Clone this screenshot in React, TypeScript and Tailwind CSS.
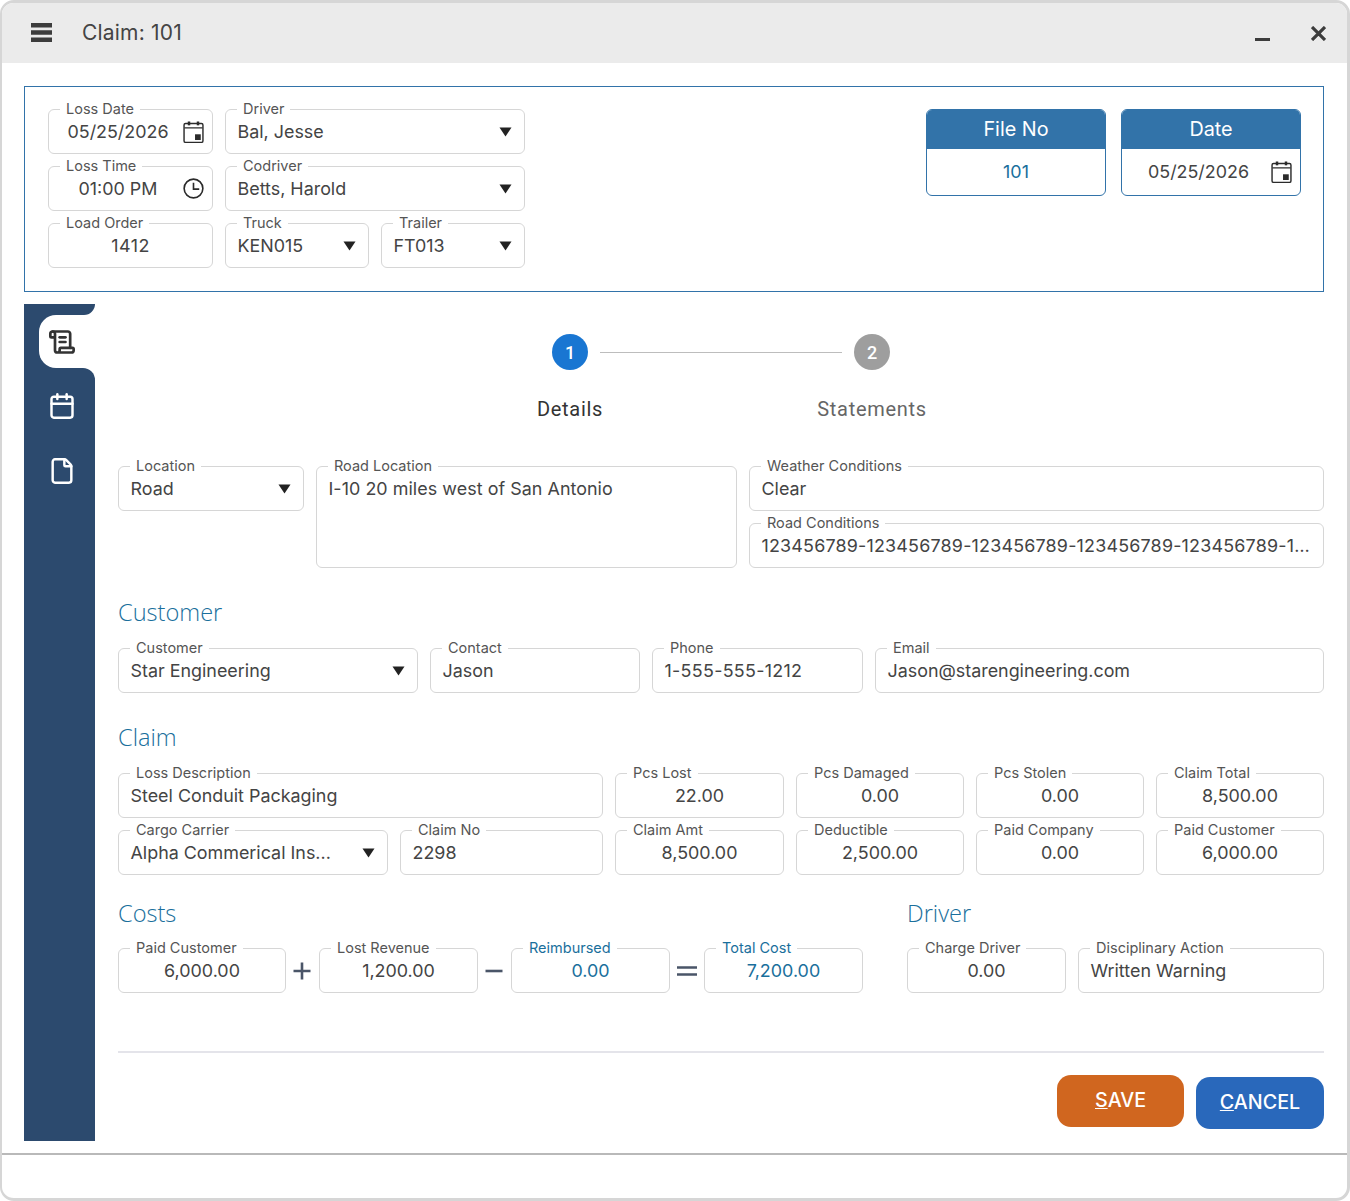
import React from "react";
import { ScrollText, Calendar, File } from "lucide-react";

const Caret = () => (
  <svg width="13" height="10" viewBox="0 0 13 10" className="shrink-0">
    <path d="M0.5 0.5h12L6.5 9.5z" fill="#222" />
  </svg>
);

const CalIcon = () => (
  <svg width="21" height="24" viewBox="0 0 22 24" className="shrink-0">
    <rect x="1.1" y="3.1" width="19.8" height="19.8" rx="1.6" fill="none" stroke="#2b2b2b" strokeWidth="1.5" />
    <path d="M1.5 7.7h19" stroke="#2b2b2b" strokeWidth="1.5" />
    <rect x="5" y="1" width="2.6" height="4" fill="#2b2b2b" />
    <rect x="14.4" y="1" width="2.6" height="4" fill="#2b2b2b" />
    <rect x="12.6" y="14.4" width="6" height="6" fill="#2b2b2b" />
  </svg>
);

const ClockIcon = () => (
  <svg width="21" height="21" viewBox="0 0 22 22" className="shrink-0">
    <circle cx="11" cy="11" r="9.8" fill="none" stroke="#2b2b2b" strokeWidth="1.7" />
    <path d="M11 5v6.6h6" fill="none" stroke="#2b2b2b" strokeWidth="1.7" />
  </svg>
);

type FieldProps = {
  label: string;
  value: string;
  className: string;
  valueClass?: string;
  center?: boolean;
  caret?: boolean;
  icon?: React.ReactNode;
  accent?: boolean;
  top?: boolean;
};

const Field = ({ label, value, className, valueClass = "", center, caret, icon, accent, top }: FieldProps) => (
  <div
    className={`relative shrink-0 rounded-[6px] border border-[#d6d6d6] bg-white flex ${top ? "items-start pt-[9px]" : "items-center"} ${className}`}
  >
    <span
      className={`absolute left-[11px] top-[-9px] bg-white px-[6px] text-[14.5px] leading-[16px] whitespace-nowrap ${accent ? "text-[#1a6f9c]" : "text-[#555555]"}`}
    >
      {label}
    </span>
    <span
      className={`flex-1 min-w-0 truncate text-[17.9px] leading-[24px] pt-[1px] ${center ? "text-center" : "pl-[11.5px]"} ${accent ? "text-[#1a6f9c]" : "text-[#444444]"} ${valueClass}`}
    >
      {value}
    </span>
    {caret && (
      <span className="ml-[8px] mr-[12px]">
        <Caret />
      </span>
    )}
    {icon && <span className="-ml-[4px] mr-[8px] flex">{icon}</span>}
  </div>
);

const Heading = ({ children, className = "" }: { children: React.ReactNode; className?: string }) => (
  <h2
    className={`text-[23.6px] leading-[30px] font-light text-[#1a6f9c] ${className}`}
    style={{ fontFamily: "'Open Sans', sans-serif" }}
  >
    {children}
  </h2>
);

const InfoCard = ({ title, children }: { title: string; children: React.ReactNode }) => (
  <div className="w-[180px] h-[87px] rounded-[6px] border border-[#3273a9] flex flex-col overflow-hidden">
    <div className="h-[39px] bg-[#3273a9] text-white text-[19.8px] leading-[38px] text-center">{title}</div>
    <div className="flex-1 flex items-center">{children}</div>
  </div>
);

const Op = ({ d, w }: { d: string; w: string }) => (
  <div className={`${w} shrink-0 flex items-center justify-center pr-[1px]`}>
    <svg width="20" height="20" viewBox="0 0 20 20">
      <path d={d} stroke="#4a5568" strokeWidth="2.6" fill="none" />
    </svg>
  </div>
);

export default function App() {
  return (
    <div
      className="w-[1350px] h-[1201px] bg-white flex flex-col overflow-hidden rounded-[14px] border-solid border-[#d6d6d6] border-t-[3px] border-b-[3px] border-l-[2px] border-r-[3px]"
      style={{ fontFamily: "Inter, 'Noto Sans', sans-serif" }}
    >
      <header className="h-[60px] shrink-0 bg-[#ebebeb] flex items-center pl-[29px] pr-[21px]">
        <svg width="21" height="19" viewBox="0 0 21 19" className="shrink-0 -mt-[2px]">
          <path d="M0 0h21v4.6H0zM0 7.2h21v4.6H0zM0 14.4h21V19H0z" fill="#3c3c3c" />
        </svg>
        <span className="ml-[30px] text-[21px] tracking-[0.2px] text-[#444444]">Claim: 101</span>
        <div className="ml-auto flex items-center gap-[41px]">
          <svg width="15" height="20" viewBox="0 0 15 20">
            <path d="M0 16.5h15" stroke="#3c3c3c" strokeWidth="3" />
          </svg>
          <svg width="15" height="15" viewBox="0 0 15 15">
            <path d="M1 1l13 13M14 1L1 14" stroke="#3c3c3c" strokeWidth="3.2" />
          </svg>
        </div>
      </header>

      <div className="pl-[22px] pr-[23px] shrink-0">
        <section className="mt-[23px] h-[206px] border border-[#3273a9] pt-[22px] pl-[23px] pr-[22px] flex justify-between">
          <div className="flex flex-col gap-[12px] w-[477px]">
            <div className="flex gap-[12px]">
              <Field label="Loss Date" value="05/25/2026" className="w-[165px] h-[45px]" center icon={<CalIcon />} />
              <Field label="Driver" value="Bal, Jesse" className="w-[300px] h-[45px]" caret />
            </div>
            <div className="flex gap-[12px]">
              <Field label="Loss Time" value="01:00 PM" className="w-[165px] h-[45px]" center icon={<ClockIcon />} />
              <Field label="Codriver" value="Betts, Harold" className="w-[300px] h-[45px]" caret />
            </div>
            <div className="flex gap-[12px]">
              <Field label="Load Order" value="1412" className="w-[165px] h-[45px]" valueClass="tracking-[0.5px]" center />
              <Field label="Truck" value="KEN015" className="w-[144px] h-[45px]" caret />
              <Field label="Trailer" value="FT013" className="w-[144px] h-[45px]" caret />
            </div>
          </div>
          <div className="flex gap-[15px]">
            <InfoCard title="File No">
              <span className="flex-1 text-center text-[17.9px] text-[#1a6f9c]">101</span>
            </InfoCard>
            <InfoCard title="Date">
              <span className="flex-1 text-center text-[17.9px] text-[#444444]">05/25/2026</span>
              <span className="-ml-[4px] mr-[8px] flex">
                <CalIcon />
              </span>
            </InfoCard>
          </div>
        </section>

        <div className="mt-[12px] h-[837px] flex gap-[23px]">
          <nav className="w-[71px] shrink-0 flex flex-col">
            <div className="h-[11px] bg-[#2c4a6e] rounded-br-[12px]" />
            <div className="bg-[#2c4a6e] pl-[15px]">
              <div className="h-[53px] bg-white rounded-l-[17px] flex items-center pl-[9px]">
                <ScrollText size={28} strokeWidth={2.3} color="#333333" />
              </div>
            </div>
            <div className="flex-1 bg-[#2c4a6e] rounded-tr-[12px] pl-[24px] pt-[24px] flex flex-col gap-[37px]">
              <Calendar size={28} strokeWidth={2.1} color="#ffffff" />
              <File size={28} strokeWidth={2.1} color="#ffffff" />
            </div>
          </nav>

          <main className="flex-1 min-w-0 pt-[30px]">
            <div className="flex items-center justify-center gap-[12px]">
              <div className="w-[36px] h-[36px] rounded-full bg-[#1976d2] text-white text-[18px] font-medium flex items-center justify-center" style={{ fontFamily: "Roboto, sans-serif" }}>1</div>
              <div className="w-[242px] h-[1px] bg-[#bdbdbd]" />
              <div className="w-[36px] h-[36px] rounded-full bg-[#9e9e9e] text-white text-[18px] font-medium flex items-center justify-center" style={{ fontFamily: "Roboto, sans-serif" }}>2</div>
            </div>
            <div
              className="mt-[25px] flex justify-center text-[20px] leading-[28px] tracking-[0.7px]"
              style={{ fontFamily: "Roboto, sans-serif" }}
            >
              <div className="w-[302px] text-center text-[#333333]">Details</div>
              <div className="w-[302px] text-center text-[#666666]">Statements</div>
            </div>

            <div className="mt-[43px] flex gap-[12px]">
              <Field label="Location" value="Road" className="w-[186px] h-[45px]" caret />
              <Field label="Road Location" value="I-10 20 miles west of San Antonio" className="w-[421px] h-[102px]" valueClass="tracking-[0.05px]" top />
              <div className="flex-1 min-w-0 flex flex-col gap-[12px]">
                <Field label="Weather Conditions" value="Clear" className="w-full h-[45px]" />
                <Field
                  label="Road Conditions"
                  value="123456789-123456789-123456789-123456789-123456789-123456789"
                  className="w-full h-[45px] pr-[12px]"
                  valueClass="tracking-[0.2px]"
                />
              </div>
            </div>

            <Heading className="mt-[29px] mb-[21px]">Customer</Heading>
            <div className="flex gap-[12px]">
              <Field label="Customer" value="Star Engineering" className="w-[300px] h-[45px]" caret />
              <Field label="Contact" value="Jason" className="w-[210px] h-[45px]" />
              <Field label="Phone" value="1-555-555-1212" className="w-[211px] h-[45px]" valueClass="tracking-[0.3px]" />
              <Field label="Email" value="Jason@starengineering.com" className="flex-1 h-[45px]" />
            </div>

            <Heading className="mt-[29px] mb-[21px]">Claim</Heading>
            <div className="flex flex-col gap-[12px]">
              <div className="flex gap-[12px]">
                <Field label="Loss Description" value="Steel Conduit Packaging" className="w-[485px] h-[45px]" />
                <Field label="Pcs Lost" value="22.00" className="w-[169px] h-[45px]" center />
                <Field label="Pcs Damaged" value="0.00" className="w-[168px] h-[45px]" center />
                <Field label="Pcs Stolen" value="0.00" className="w-[168px] h-[45px]" center />
                <Field label="Claim Total" value="8,500.00" className="w-[168px] h-[45px]" center />
              </div>
              <div className="flex gap-[12px]">
                <Field label="Cargo Carrier" value="Alpha Commerical Ins..." className="w-[270px] h-[45px]" caret />
                <Field label="Claim No" value="2298" className="w-[203px] h-[45px]" />
                <Field label="Claim Amt" value="8,500.00" className="w-[169px] h-[45px]" center />
                <Field label="Deductible" value="2,500.00" className="w-[168px] h-[45px]" center />
                <Field label="Paid Company" value="0.00" className="w-[168px] h-[45px]" center />
                <Field label="Paid Customer" value="6,000.00" className="w-[168px] h-[45px]" center />
              </div>
            </div>

            <div className="mt-[23px] flex gap-[44px]">
              <div className="w-[745px] shrink-0">
                <Heading className="mb-[20px]">Costs</Heading>
                <div className="flex">
                  <Field label="Paid Customer" value="6,000.00" className="w-[168px] h-[45px]" center />
                  <Op w="w-[33px]" d="M10 1.5v17M1.5 10h17" />
                  <Field label="Lost Revenue" value="1,200.00" className="w-[159px] h-[45px]" center />
                  <Op w="w-[33px]" d="M1.5 10h17" />
                  <Field label="Reimbursed" value="0.00" className="w-[159px] h-[45px]" center accent />
                  <Op w="w-[34px]" d="M0 6.5h22M0 13.5h22" />
                  <Field label="Total Cost" value="7,200.00" className="w-[159px] h-[45px]" center accent />
                </div>
              </div>
              <div className="flex-1 min-w-0">
                <Heading className="mb-[20px]">Driver</Heading>
                <div className="flex gap-[12px]">
                  <Field label="Charge Driver" value="0.00" className="w-[159px] h-[45px]" center />
                  <Field label="Disciplinary Action" value="Written Warning" className="flex-1 h-[45px]" />
                </div>
              </div>
            </div>

            <div className="mt-[58px] h-[2px] bg-[#e4e4ea]" />
            <div className="mt-[22px] flex justify-end items-start gap-[12px]">
              <button className="w-[127px] h-[52px] rounded-[14px] bg-[#d0661f] text-white text-[19.7px] font-medium">
                <u>S</u>AVE
              </button>
              <button className="mt-[2px] w-[128px] h-[52px] rounded-[14px] bg-[#2968bb] text-white text-[19.7px] font-medium">
                <u>C</u>ANCEL
              </button>
            </div>
          </main>
        </div>
      </div>

      <div className="mt-[12px] flex-1 border-t-[2px] border-[#b9b9b9]" />
    </div>
  );
}
